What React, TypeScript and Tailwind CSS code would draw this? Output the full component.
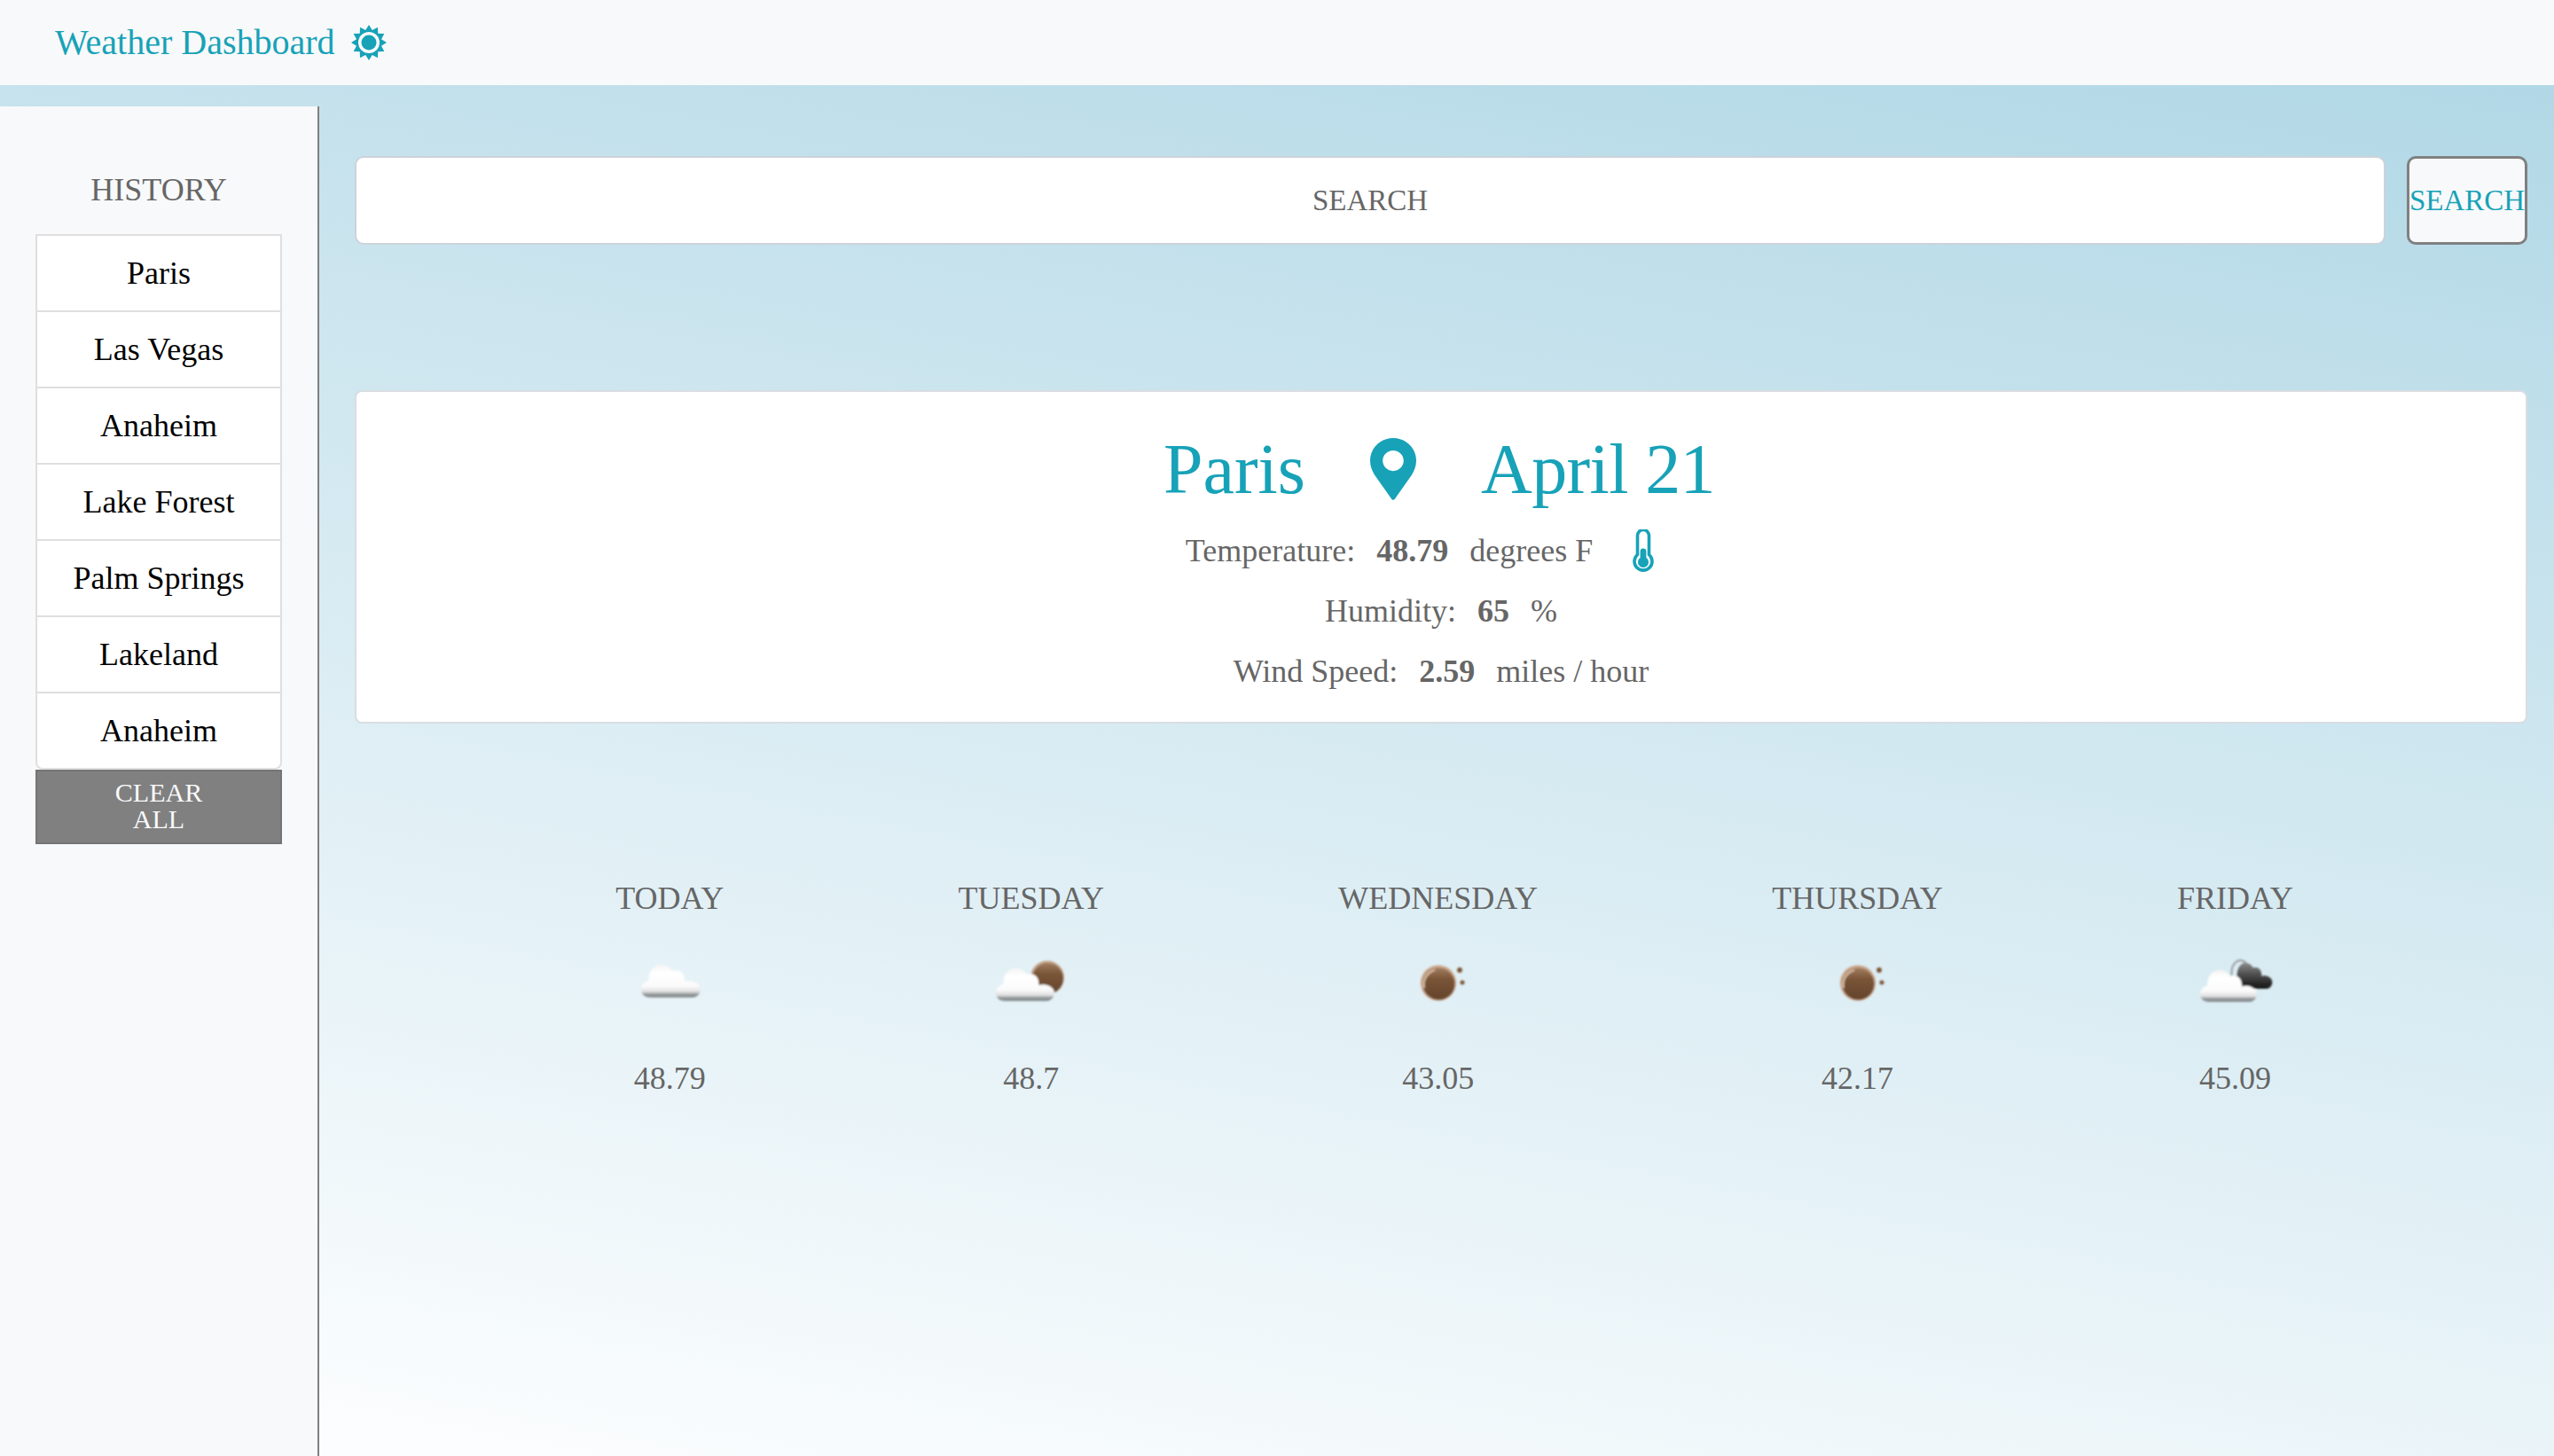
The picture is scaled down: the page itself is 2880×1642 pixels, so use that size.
import React from 'react'

const HISTORY = ['Paris', 'Las Vegas', 'Anaheim', 'Lake Forest', 'Palm Springs', 'Lakeland', 'Anaheim']

function SunLogo() {
  const points = Array.from({ length: 24 }, (_, i) => {
    const r = i % 2 === 0 ? 20 : 14.5
    const a = (i * Math.PI) / 12 - Math.PI / 2
    return `${20 + r * Math.cos(a)},${20 + r * Math.sin(a)}`
  }).join(' ')
  return (
    <svg width="40" height="40" viewBox="0 0 40 40">
      <polygon points={points} fill="#17a2b8" />
      <circle cx="20" cy="20" r="12" fill="#f8f9fa" />
      <circle cx="20" cy="20" r="8.5" fill="#17a2b8" />
    </svg>
  )
}

function Pin() {
  return (
    <svg width="52" height="70" viewBox="0 0 52 70">
      <path
        fillRule="evenodd"
        fill="#17a2b8"
        d="M26 0C11.6 0 0 11.4 0 25.6c0 6 2 10.6 4.8 15.6L24 68.5c1 1.8 3 1.8 4 0l19.2-27.3C50 36.2 52 31.6 52 25.6 52 11.4 40.4 0 26 0zm0 14c6.4 0 11.8 5.2 11.8 11.6S32.4 37.2 26 37.2s-11.8-5.2-11.8-11.6S19.6 14 26 14z"
      />
    </svg>
  )
}

function Thermometer() {
  return (
    <svg width="24" height="48" viewBox="0 0 24 48">
      <path
        d="M5.5 7a6.5 6.5 0 0 1 13 0v21.5a10 10 0 1 1-13 0z"
        fill="none"
        stroke="#17a2b8"
        strokeWidth="3.6"
      />
      <path d="M8.6 25a3.4 3.4 0 0 1 6.8 0v7a6 6 0 1 1-6.8 0z" fill="#17a2b8" />
    </svg>
  )
}

const CLOUD =
  'M10 37C4 37 0 33 0 28 0 23 3 19 8 18 8 9 12 1 20 0 26-1 31 3 34 7 38 5 44 7 46 12 47 15 47 17 47 19 52 17 60 19 63 24 66 29 62 37 55 37Z'

function Cloud({ x, y, w, h, dark }: { x: number; y: number; w: number; h: number; dark?: boolean }) {
  return (
    <path
      d={CLOUD}
      transform={`translate(${x} ${y}) scale(${w / 65} ${h / 37})`}
      fill={dark ? 'url(#cloudDark)' : 'url(#cloudWhite)'}
    />
  )
}

function Moon() {
  return (
    <>
      <circle cx="50" cy="52.5" r="20" fill="#c9a488" />
      <circle cx="50.5" cy="53.5" r="18" fill="url(#brown)" />
      <path d="M34 58a17 17 0 0 1 12-20" fill="none" stroke="#e9d0bc" strokeWidth="1.6" />
      <circle cx="74" cy="38" r="2.9" fill="#7a5236" />
      <circle cx="77" cy="52" r="2.5" fill="#7a5236" />
    </>
  )
}

function WeatherIcon({ kind }: { kind: string }) {
  return (
    <svg width="100" height="100" viewBox="0 0 100 100">
      <defs>
        <linearGradient id="cloudWhite" x1="0" y1="0" x2="0" y2="1">
          <stop offset="0" stopColor="#f4f4f4" />
          <stop offset="0.25" stopColor="#ffffff" />
          <stop offset="0.65" stopColor="#fbfbfb" />
          <stop offset="0.82" stopColor="#dfdfdf" />
          <stop offset="0.91" stopColor="#8c9193" />
          <stop offset="1" stopColor="#8c9496" />
        </linearGradient>
        <linearGradient id="cloudDark" x1="0" y1="0" x2="0" y2="1">
          <stop offset="0" stopColor="#8a8a8a" />
          <stop offset="0.45" stopColor="#4e4e4e" />
          <stop offset="1" stopColor="#141414" />
        </linearGradient>
        <linearGradient id="brown" x1="0" y1="0" x2="0" y2="1">
          <stop offset="0" stopColor="#a17d60" />
          <stop offset="0.35" stopColor="#7a5538" />
          <stop offset="1" stopColor="#64442c" />
        </linearGradient>
        <filter id="soft">
          <feGaussianBlur stdDeviation="0.8" />
        </filter>
      </defs>
      <g filter="url(#soft)">
        {kind === 'clouds' && <Cloud x={18} y={32} w={68} h={37} />}
        {kind === 'sunCloud' && (
          <>
            <circle cx="68" cy="46.5" r="19" fill="#c0a288" />
            <circle cx="68.5" cy="47.5" r="17.5" fill="url(#brown)" />
            <Cloud x={10} y={36} w={67} h={37} />
          </>
        )}
        {kind === 'clear' && <Moon />}
        {kind === 'broken' && (
          <>
            <path d="M47 46a10 14 0 0 1 17-14" fill="none" stroke="#9a9a9a" strokeWidth="2" />
            <Cloud x={47} y={30} w={46} h={29} dark />
            <Cloud x={11} y={38} w={65} h={36} />
          </>
        )}
      </g>
    </svg>
  )
}

const FORECAST = [
  { day: 'TODAY', temp: '48.79', kind: 'clouds' },
  { day: 'TUESDAY', temp: '48.7', kind: 'sunCloud' },
  { day: 'WEDNESDAY', temp: '43.05', kind: 'clear' },
  { day: 'THURSDAY', temp: '42.17', kind: 'clear' },
  { day: 'FRIDAY', temp: '45.09', kind: 'broken' },
]

export default function App() {
  return (
    <div className="min-h-screen flex flex-col font-['Liberation_Serif',serif] text-[36px] text-[#666666] bg-[linear-gradient(11deg,#ffffff_0%,#aed6e5_100%)]">
      <header className="h-[96px] bg-[#f8f9fa] flex items-center pl-[62px] gap-[18px]">
        <span className="text-[40px] text-[#17a2b8]">Weather Dashboard</span>
        <SunLogo />
      </header>

      <div className="flex-1 flex mt-[24px]">
        <aside className="w-[360px] shrink-0 bg-[#f8f9fa] border-r-[2px] border-[#808080] pl-[40px] pr-[40px]">
          <h2 className="h-[144px] pt-[44px] flex items-center justify-center text-[#666666]">HISTORY</h2>
          <ul>
            {HISTORY.map((city, i) => (
              <li
                key={i}
                className="h-[88px] -mt-[2px] first:mt-0 last:rounded-b-[8px] flex items-center justify-center bg-white border-[2px] border-[#dfdfdf] text-[36px] text-black"
              >
                {city}
              </li>
            ))}
          </ul>
          <button className="w-full h-[84px] block pb-[2px] bg-[#808080] border-[2px] border-[#757575] text-[30px] leading-[30px] text-[#f8f9fa]">
            CLEAR
            <br />
            ALL
          </button>
        </aside>

        <main className="flex-1 min-w-0 pl-[40px] pr-[30px] pt-[56px]">
          <div className="flex gap-[24px] h-[100px]">
            <div className="flex-1 flex items-center justify-center pt-[2px] bg-white border-[2px] border-[#ccd3da] rounded-[10px] text-[33px]">
              SEARCH
            </div>
            <button className="w-[136px] shrink-0 flex items-center justify-center pt-[2px] bg-[#f8f9fa] border-[3px] border-[#808080] rounded-[10px] text-[33px] text-[#17a2b8]">
              SEARCH
            </button>
          </div>

          <section className="mt-[164px] h-[376px] bg-white border-[2px] border-[#d9dde1] rounded-[8px] flex flex-col items-center pt-[42px]">
            <div className="h-[90px] pr-[4px] flex items-center text-[80px] text-[#17a2b8]">
              <span>Paris</span>
              <span className="mx-[73px] flex"><Pin /></span>
              <span className="tracking-[-0.6px]">April 21</span>
            </div>
            <div className="h-[68px] mt-[13px] flex items-center gap-[24px]">
              <span>Temperature:</span>
              <b>48.79</b>
              <span>degrees F</span>
              <span className="ml-[21px] mr-[48px] flex"><Thermometer /></span>
            </div>
            <div className="h-[68px] flex items-center gap-[24px]">
              <span>Humidity:</span>
              <b>65</b>
              <span>%</span>
            </div>
            <div className="h-[68px] flex items-center gap-[24px]">
              <span>Wind Speed:</span>
              <b>2.59</b>
              <span>miles / hour</span>
            </div>
          </section>

          <section className="mt-[172px] ml-[30px] flex justify-evenly">
            {FORECAST.map((f) => (
              <div key={f.day} className="flex flex-col items-center">
                <span className="h-[50px] flex items-center">{f.day}</span>
                <div className="mt-[18px] h-[100px] flex justify-center">
                  <WeatherIcon kind={f.kind} />
                </div>
                <span className="mt-[35px] h-[50px] flex items-center">{f.temp}</span>
              </div>
            ))}
          </section>
        </main>
      </div>
    </div>
  )
}
